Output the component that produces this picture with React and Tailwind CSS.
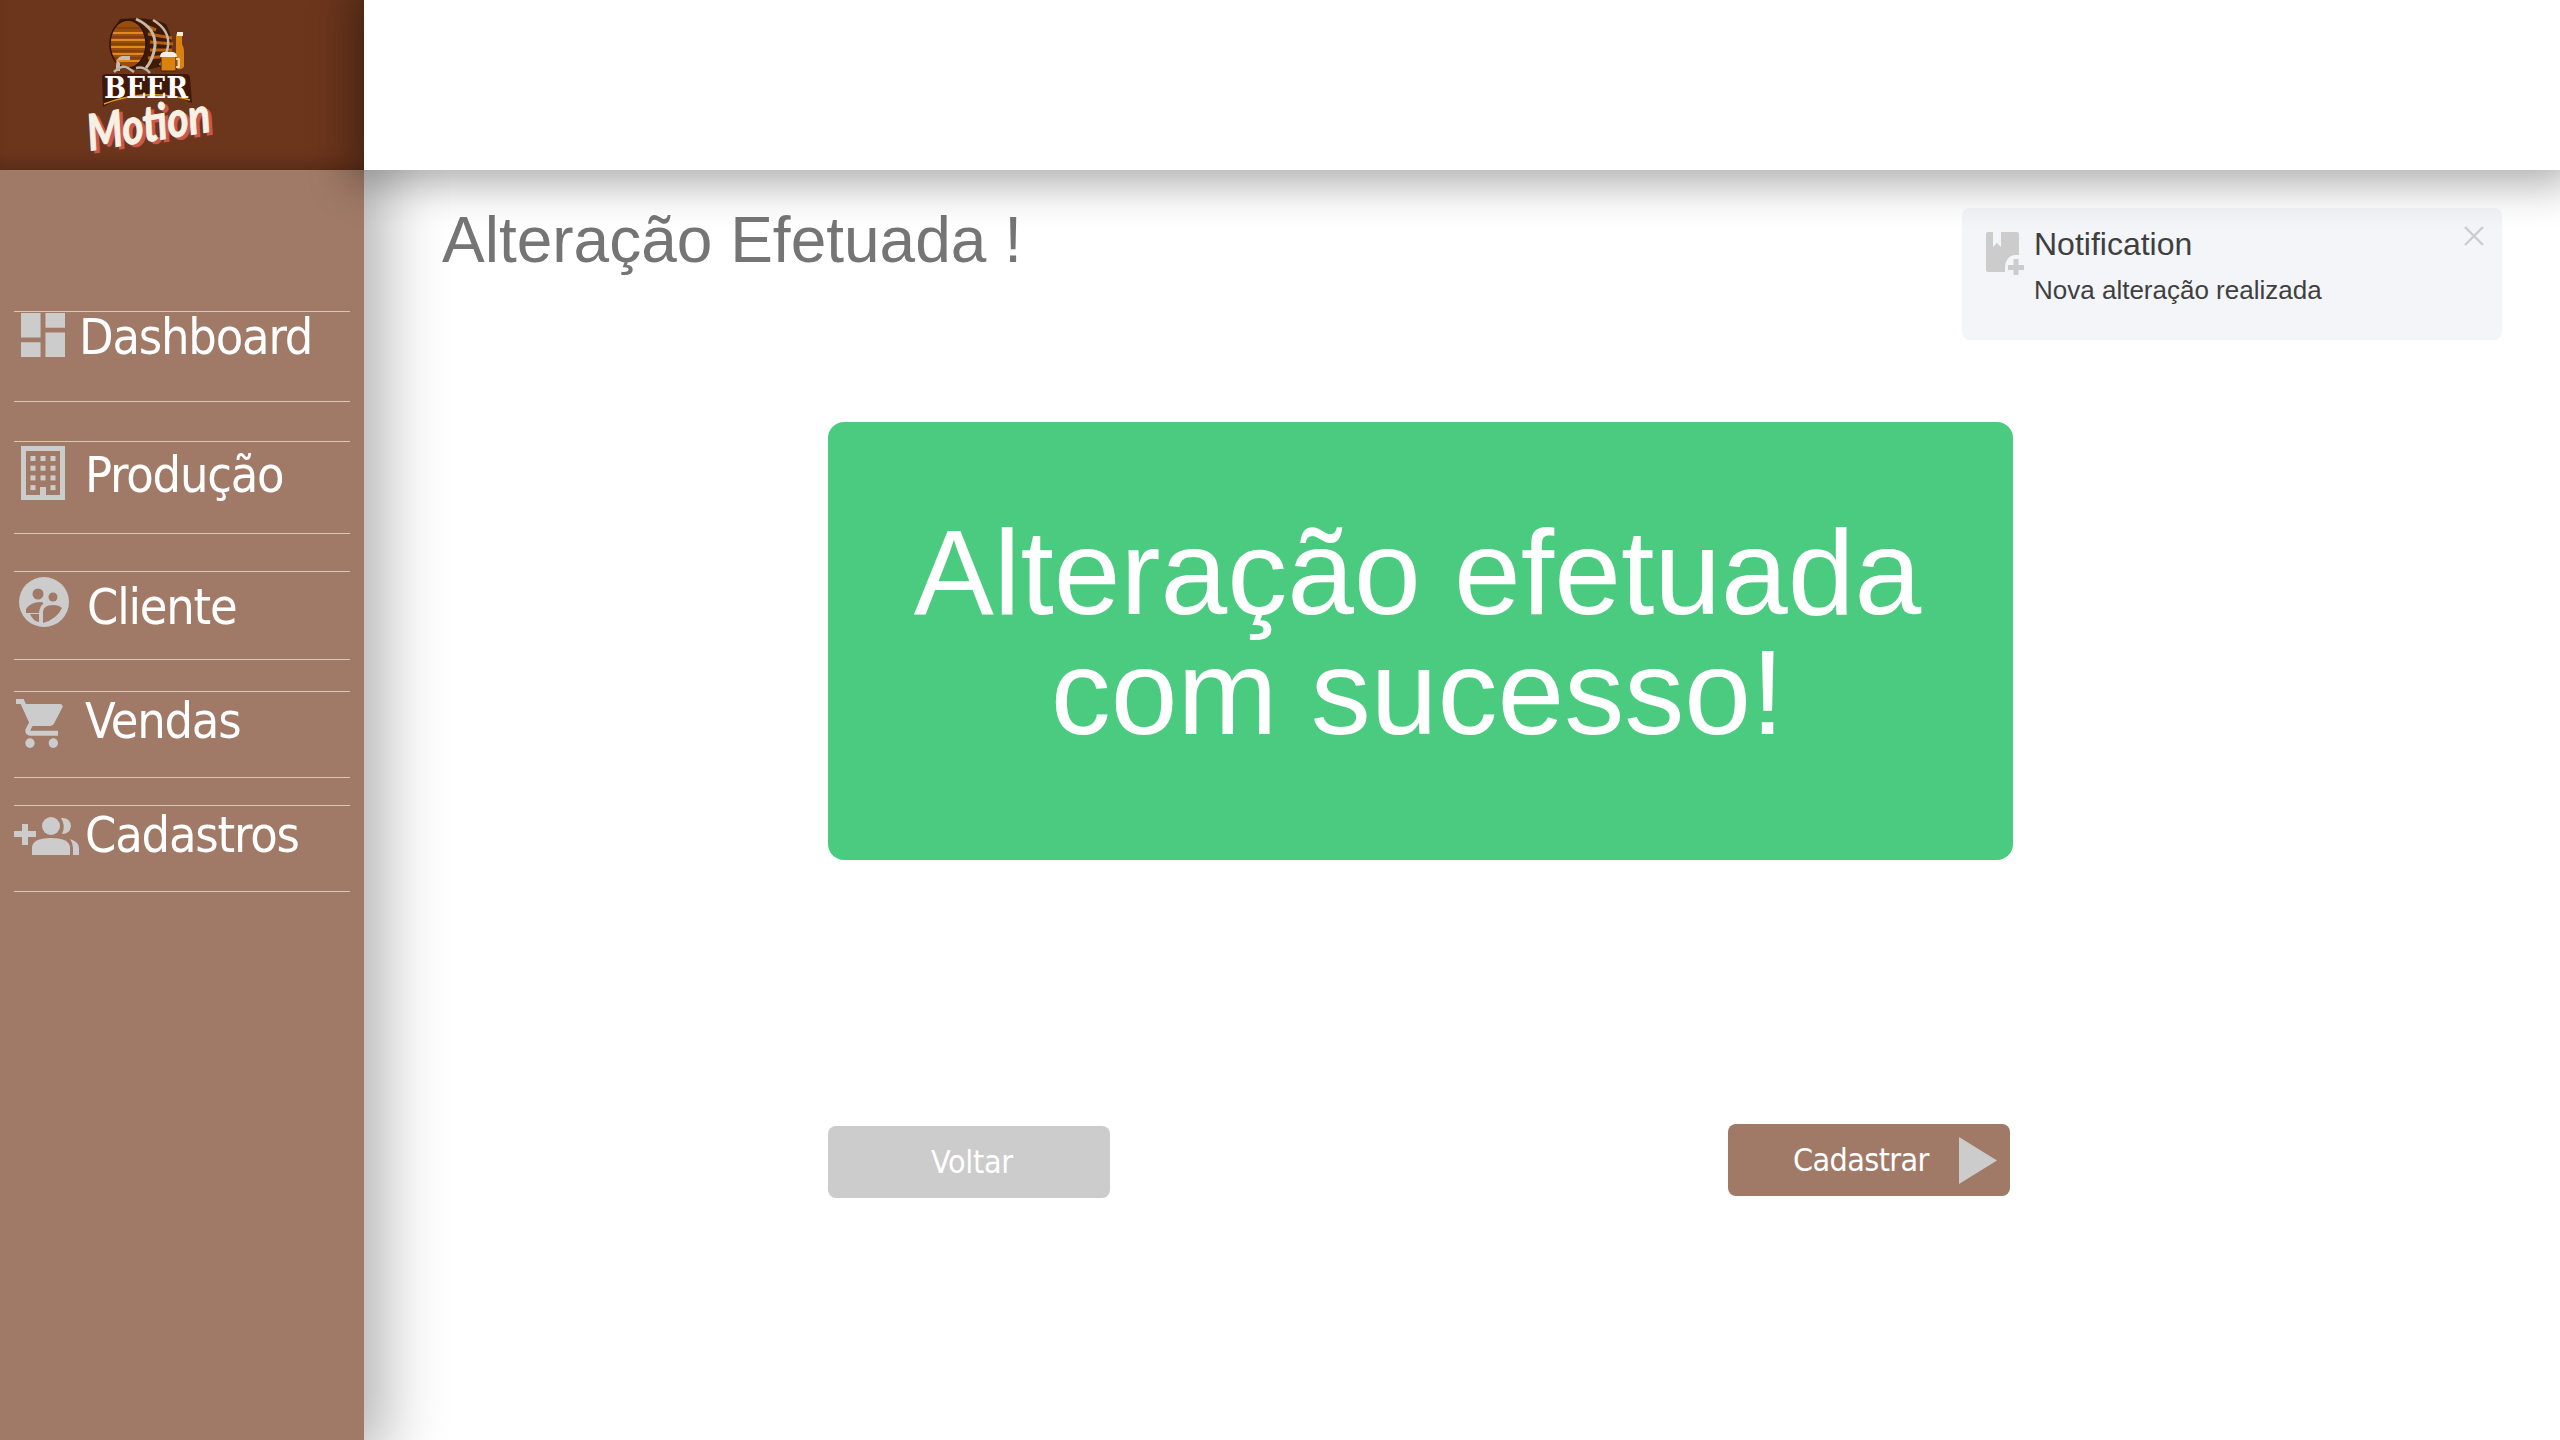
import React from 'react';

const sideFont = "font-['DejaVu_Sans_Condensed','DejaVu_Sans',sans-serif]";

function Logo() {
  return (
    <svg width="160" height="155" viewBox="70 5 160 155">
      {/* barrel */}
      <path d="M120 19 Q150 16 166 24 Q177 45 166 64 Q150 72 130 69 L117 64 Q103 42 120 19 Z" fill="#3f1a08" />
      <ellipse cx="128" cy="44" rx="18" ry="24" fill="#9a4c0d" />
      <path d="M112 33 H143 M110 40 H146 M110 47 H146 M112 54 H145 M116 61 H140" stroke="#e08a1e" strokeWidth="2.2" />
      <path d="M116 28 H140 M111 37 H145 M110 44 H146 M111 51 H146 M114 58 H142" stroke="#6e3410" strokeWidth="1.2" />
      <ellipse cx="128" cy="44" rx="18" ry="24" fill="none" stroke="#2e1206" strokeWidth="1.5" />
      <path d="M146 26 L156 30 M148 34 L172 38 M150 42 L173 44 M150 50 L172 50 M148 58 L168 56" stroke="#b5600f" strokeWidth="3" />
      <path d="M136 19 Q156 28 155 46 Q153 60 146 68" fill="none" stroke="#c7b9a4" strokeWidth="3" />
      <path d="M153 20 Q170 30 168 46 Q166 58 160 65" fill="none" stroke="#c7b9a4" strokeWidth="2.5" />
      {/* tap and stand */}
      <path d="M117 60 H130 V56 H122 Q116 57 116 66 V71 H120 V63 Z" fill="#c4bcae" />
      <path d="M114 72 Q122 64 128 68 L134 72 M136 68 Q144 66 150 73" fill="none" stroke="#bdb5a6" strokeWidth="2.5" />
      {/* bottle */}
      <path d="M176 34 H182 V44 Q184 47 184 52 V67 Q180 71 176 68 Z" fill="#d9820f" />
      <rect x="177" y="32" width="6" height="4" fill="#f4eee0" />
      {/* mug */}
      <rect x="161" y="56" width="15" height="15" rx="1.5" fill="#d9820f" stroke="#40180a" />
      <path d="M160 57 Q160 51 168 52 Q177 51 177 57 Z" fill="#f5efe3" />
      <path d="M176 59 H179 V67 H176" fill="none" stroke="#f5efe3" strokeWidth="1.5" />
      {/* banner */}
      <path d="M102 76 Q103 74 106 74 H186 Q190 74 190 78 L192 103 Q168 92 146 94 Q124 94 103 107 Z" fill="#40180a" />
      <path d="M104 104 Q146 88 190 100" fill="none" stroke="#e09a12" strokeWidth="1.5" />
      <text x="146" y="98" textAnchor="middle" fontFamily="'DejaVu Serif', serif" fontWeight="700" fontSize="29" fill="#ffffff" textLength="84" lengthAdjust="spacingAndGlyphs">BEER</text>
      {/* motion wordmark */}
      <g transform="rotate(-9 150 128)" fontFamily="Lato, sans-serif" fontStyle="italic" fontWeight="700" fontSize="50">
        <text x="152" y="144" textAnchor="middle" fill="#c9594f" stroke="#c9594f" strokeWidth="1" textLength="124" lengthAdjust="spacingAndGlyphs">Motion</text>
        <text x="149" y="141" textAnchor="middle" fill="#f7f1e4" stroke="#f7f1e4" strokeWidth="1" textLength="124" lengthAdjust="spacingAndGlyphs">Motion</text>
      </g>
    </svg>
  );
}

function DashboardIcon() {
  return (
    <svg viewBox="3 3 18 18" className="w-[44px] h-[44px] fill-[#cccccc]">
      <path d="M3 13h8V3H3v10zm0 8h8v-6H3v6zm10 0h8V11h-8v10zm0-18v6h8V3h-8z" />
    </svg>
  );
}

function BuildingIcon() {
  const cells = [];
  for (let r = 0; r < 4; r++) {
    for (let c = 0; c < 3; c++) {
      if (r === 3 && c === 1) continue;
      cells.push(<rect key={`${r}-${c}`} x={9.5 + c * 10} y={10 + r * 9.7} width="5" height="5" />);
    }
  }
  return (
    <svg viewBox="0 0 44 54" className="w-[44px] h-[54px] fill-[#cccccc]">
      <path fillRule="evenodd" d="M0 0H44V54H0Z M5 5V49H19V41H25V49H39V5Z" />
      {cells}
    </svg>
  );
}

function ClienteIcon() {
  return (
    <svg viewBox="0 0 50 50" className="w-[50px] h-[50px]">
      <circle cx="25" cy="25" r="25" fill="#cccccc" />
      <circle cx="19" cy="17" r="5.5" fill="#a07a67" />
      <circle cx="34" cy="20" r="4.5" fill="#a07a67" />
      <path d="M7 32 Q12 25 21 25 Q27 25 22 29 Q20 33 20 36 L7 36 Z M11 37 H20 V45 Q14 44 11 37Z" fill="#a07a67" />
      <path d="M24 46 V34 Q25 28 34 28 Q40 28 43 31 Q38 42 24 46 Z" fill="#a07a67" />
    </svg>
  );
}

function CartIcon() {
  return (
    <svg viewBox="1 2 21 20" preserveAspectRatio="none" className="w-[49px] h-[49px] fill-[#cccccc]">
      <path d="M7 18c-1.1 0-1.99.9-1.99 2S5.9 22 7 22s2-.9 2-2-.9-2-2-2zM1 2v2h2l3.6 7.59-1.35 2.45c-.16.28-.25.61-.25.96 0 1.1.9 2 2 2h12v-2H7.42c-.14 0-.25-.11-.25-.25l.03-.12.9-1.63h7.45c.75 0 1.41-.41 1.75-1.03l3.58-6.49c.08-.14.12-.31.12-.48 0-.55-.45-1-1-1H5.21l-.94-2H1zm16 16c-1.1 0-1.99.9-1.99 2s.89 2 1.99 2 2-.9 2-2-.9-2-2-2z" />
    </svg>
  );
}

function GroupAddIcon() {
  return (
    <svg viewBox="0 0 65 38" className="w-[65px] h-[38px] fill-[#cccccc]">
      <path d="M8 7H14V14H22V20H14V28H8V20H0V14H8Z" />
      <circle cx="37" cy="9" r="9" />
      <path d="M18 38V31Q18 21 37 21Q56 21 56 31V38Z" />
      <path d="M47 1Q56 0 57 9Q56 17 48 17Q52 9 47 1Z" />
      <path d="M56 22Q65 25 65 31V38H59V31Q59 26 56 22Z" />
    </svg>
  );
}

function NotifIcon() {
  return (
    <svg viewBox="0 0 38 43" className="w-[38px] h-[43px] fill-[#cccccc]">
      <path fillRule="evenodd" d="M2 0H7V15L11 11L15 15V0H31Q33 0 33 2V23H28Q19 25 19 36V40H2Q0 40 0 38V2Q0 0 2 0Z" />
      <path d="M27.5 27H32.5V33H38V38H32.5V43H27.5V38H22V33H27.5Z" />
    </svg>
  );
}

const menu = [
  { label: 'Dashboard', icon: <DashboardIcon />, cls: 'h-[91px] mb-[39px] pt-[1px]', text: 'ml-[14px] -mt-[6px]', ic: 'ml-[7px]' },
  { label: 'Produção', icon: <BuildingIcon />, cls: 'h-[93px] mb-[37px] pt-[4px]', text: 'ml-[20px] -mt-[1px]', ic: 'ml-[7px]' },
  { label: 'Cliente', icon: <ClienteIcon />, cls: 'h-[89px] mb-[31px] pt-[5px]', text: 'ml-[18px] mt-[0px]', ic: 'ml-[5px]' },
  { label: 'Vendas', icon: <CartIcon />, cls: 'h-[87px] mb-[27px] pt-[7px]', text: 'ml-[20px] -mt-[8px]', ic: 'ml-[2px]' },
  { label: 'Cadastros', icon: <GroupAddIcon />, cls: 'h-[87px] pt-[11px]', text: 'ml-[6px] -mt-[12px]', ic: '' },
];

export default function App() {
  return (
    <div className="flex h-screen w-full overflow-hidden bg-white font-['Liberation_Sans',Arial,sans-serif]">
      <aside className="relative z-20 w-[364px] shrink-0 bg-[#a07a67] shadow-[0_0_60px_18px_rgba(0,0,0,0.32)]">
        <div className="h-[170px] bg-[#6c361c] pl-[70px] pt-[5px] shadow-[inset_0_-14px_18px_-10px_rgba(0,0,0,0.25)]">
          <Logo />
        </div>
        <nav className={`mt-[141px] mx-[14px] ${sideFont}`}>
          {menu.map((m) => (
            <div key={m.label} className={`flex items-start border-y-[1px] border-[#d9c6bb] ${m.cls}`}>
              <div className={`shrink-0 ${m.ic}`}>{m.icon}</div>
              <span className={`text-[50px] leading-[60px] tracking-[-1.2px] text-white ${m.text}`}>{m.label}</span>
            </div>
          ))}
        </nav>
      </aside>

      <main className="relative flex flex-1 flex-col">
        <div className="relative z-30 h-[170px] shrink-0 bg-white shadow-[0_0_40px_14px_rgba(0,0,0,0.32)]" />

        <div className="absolute right-[58px] top-[208px] h-[132px] w-[540px] rounded-[8px] bg-[#f4f5f9] pl-[24px] pt-[24px]">
          <div className="flex items-start">
            <NotifIcon />
            <div className="ml-[10px] -mt-[8px] text-[#3f3f3f]">
              <div className="text-[32px] leading-[40px]">Notification</div>
              <div className="mt-[8px] text-[26px] leading-[36px]">Nova alteração realizada</div>
            </div>
          </div>
          <svg viewBox="0 0 20 20" className="absolute right-[18px] top-[18px] h-[20px] w-[20px] stroke-[#cccccc] stroke-[2.4]">
            <path d="M1 1L19 19M19 1L1 19" />
          </svg>
        </div>

        <h1 className="ml-[78px] mt-[33px] text-[64px] font-normal leading-[74px] text-[#757575]">Alteração Efetuada !</h1>

        <div className="ml-[464px] mt-[145px] flex h-[438px] w-[1185px] items-center justify-center rounded-[16px] bg-[#4bcb80] pb-[18px] text-center text-[120px] leading-[120px] text-white">
          <div className="-ml-[6px]">Alteração efetuada<br />com sucesso!</div>
        </div>

        <div className={`ml-[464px] mt-[264px] flex w-[1182px] items-start justify-between ${sideFont} text-[32px] text-white`}>
          <button className="mt-[2px] h-[72px] w-[282px] rounded-[8px] bg-[#cccccc] pl-[6px] leading-[72px] tracking-[-0.3px]">Voltar</button>
          <button className="flex h-[72px] w-[282px] items-center rounded-[8px] bg-[#a07a67] pl-[65px]">
            <span className="tracking-[-0.6px]">Cadastrar</span>
            <svg viewBox="0 0 38 47" className="ml-[30px] h-[47px] w-[38px] fill-[#cccccc]">
              <path d="M0 0L38 23.5L0 47Z" />
            </svg>
          </button>
        </div>
      </main>
    </div>
  );
}
